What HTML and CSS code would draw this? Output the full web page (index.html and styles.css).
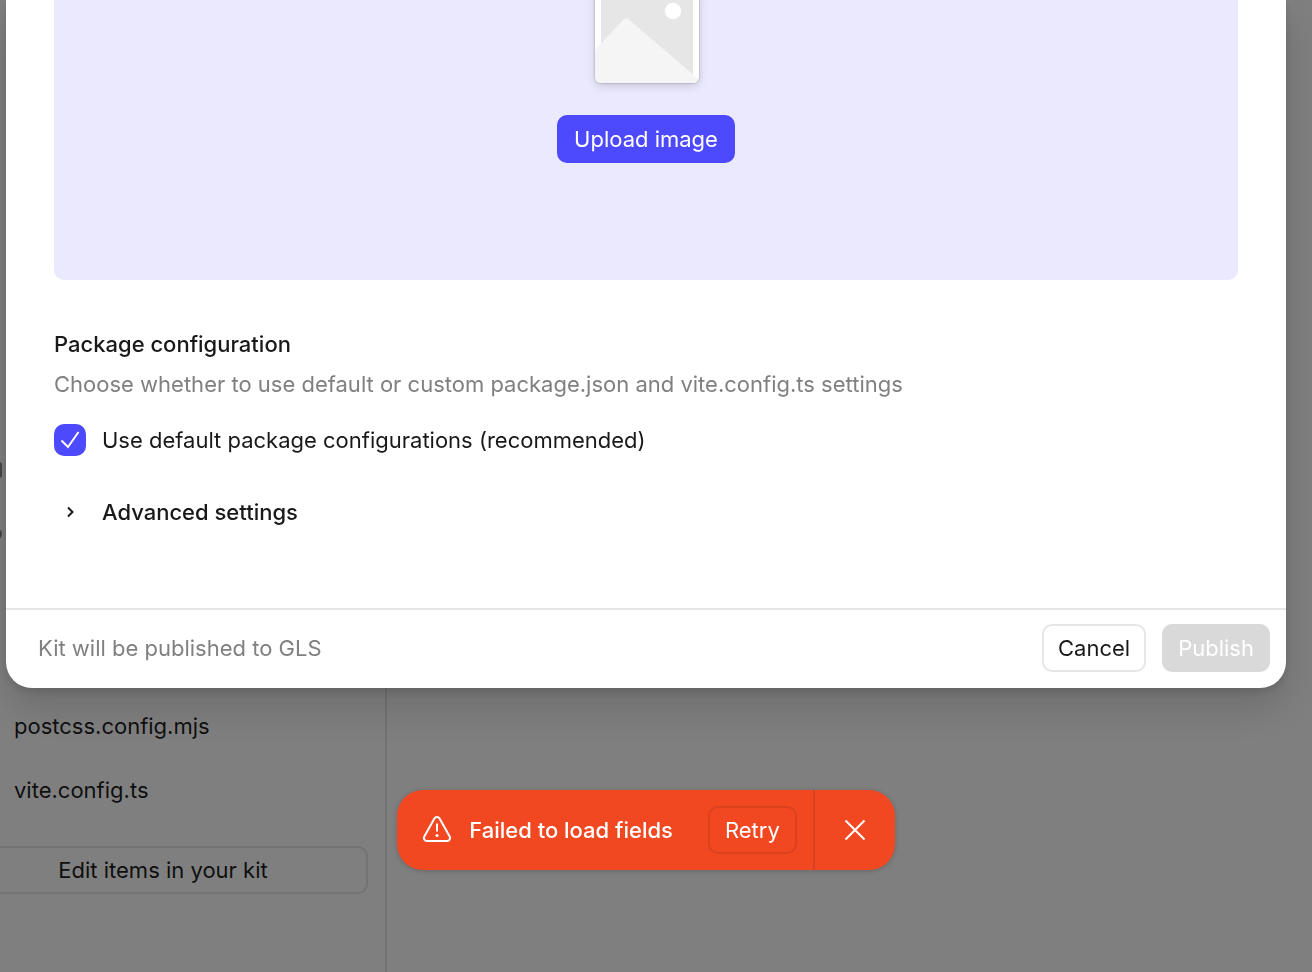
FILE: index.html
```html
<!DOCTYPE html>
<html lang="en">
<head>
<meta charset="utf-8">
<meta name="viewport" content="width=device-width, initial-scale=1">
<title>Publish kit</title>
<link rel="stylesheet" href="styles.css">
</head>
<body>
<div class="app">
  <aside class="sidebar">
    <ul class="files">
      <li class="file"><span class="file-mark"></span></li>
      <li class="file"><span class="file-mark file-mark-small"></span></li>
      <li class="file"></li>
      <li class="file"></li>
      <li class="file">postcss.config.mjs</li>
      <li class="file">vite.config.ts</li>
    </ul>
    <button class="btn edit-btn" type="button">Edit items in your kit</button>
  </aside>
  <main class="canvas"></main>
</div>

<div class="overlay">
  <div class="modal" role="dialog" aria-label="Publish kit">
    <div class="modal-body">
      <section class="dropzone">
        <svg class="thumb" width="124" height="100" viewBox="584 0 124 100" aria-hidden="true">
          <path class="thumb-card" d="M595-10H699V77a6 6 0 0 1-6 6H601a6 6 0 0 1-6-6Z"/>
          <path fill="#e6e6e6" d="M601-10H693V78H601Z"/>
          <path fill="#f5f5f5" d="M595 50 623.500 19.500Q626 17 629 19.500L693 74.500 698.500 79.500A6 6 0 0 1 693 83H601a6 6 0 0 1-6-6Z"/>
          <circle cx="673" cy="11" r="8.200" fill="#fff"/>
        </svg>
        <button class="btn btn-primary" type="button">Upload image</button>
      </section>
      <section class="config">
        <h2 class="title">Package configuration</h2>
        <p class="hint">Choose whether to use default or custom package.json and vite.config.ts settings</p>
        <label class="option">
          <span class="check">
            <input class="check-input" type="checkbox" checked>
            <svg class="check-icon" width="32" height="32" viewBox="0 0 32 32" aria-hidden="true"><path d="M7.500 16.500 14 23 24.500 8"/></svg>
          </span>
          <span>Use default package configurations (recommended)</span>
        </label>
        <button class="advanced" type="button" aria-expanded="false">
          <svg class="chevron" width="32" height="32" viewBox="0 0 32 32" aria-hidden="true"><path d="M14 11.500 18.500 16 14 20.500"/></svg>
          Advanced settings
        </button>
      </section>
    </div>
    <footer class="modal-footer">
      <p class="status">Kit will be published to GLS</p>
      <button class="btn btn-outline" type="button">Cancel</button>
      <button class="btn btn-disabled" type="button" disabled>Publish</button>
    </footer>
  </div>
</div>

<div class="toast-layer">
  <div class="toast" role="alert">
    <div class="toast-main">
      <svg class="warning" width="32" height="32" viewBox="0 0 32 32" aria-hidden="true">
        <path d="M13.400 4.600a3 3 0 0 1 5.200 0L28.700 22.400a3 3 0 0 1-2.600 4.500H5.900a3 3 0 0 1-2.600-4.500Z"/>
        <path d="M16 9.500V17.500"/>
        <circle cx="16" cy="21.500" r="1.500"/>
      </svg>
      <strong class="toast-text">Failed to load fields</strong>
      <button class="btn retry" type="button">Retry</button>
    </div>
    <button class="close" type="button" aria-label="Dismiss">
      <svg width="32" height="32" viewBox="0 0 32 32" aria-hidden="true"><path d="M6.500 6.500 25.500 25.500M25.500 6.500 6.500 25.500"/></svg>
    </button>
  </div>
</div>
</body>
</html>
```
FILE: styles.css
```css
* { box-sizing: border-box; }

body {
  margin: 0;
  overflow: hidden;
  background: #fff;
  color: rgba(0, 0, 0, 0.9);
  font-family: Inter, "Liberation Sans", sans-serif;
  font-size: 22px;
  line-height: 32px;
}

h2, p, ul { margin: 0; padding: 0; }
button { margin: 0; font: inherit; color: inherit; }
svg { display: block; flex: none; }

.app { display: flex; height: 100vh; }

.sidebar {
  display: flex;
  flex: none;
  flex-direction: column;
  justify-content: flex-end;
  gap: 24px;
  width: 445px;
  margin-left: -58px;
  padding: 0 17px 78px 16px;
  border-right: 2px solid #e6e6e6;
}

.files { list-style: none; }
.file { display: flex; align-items: center; height: 64px; padding-left: 30px; }
.file-mark { width: 14px; height: 16px; border-radius: 3px; background: #8c8c8c; }
.file-mark-small { height: 12px; border-radius: 6px; }
.file:nth-child(n+5) { padding-left: 56px; }
.canvas { flex: 1; }

.btn {
  height: 48px;
  padding: 0 14px;
  border: 2px solid transparent;
  border-radius: 10px;
  background: transparent;
  white-space: nowrap;
}
.edit-btn { flex: none; border-color: #e6e6e6; }
.btn-primary { padding: 0 15px; border-color: #4d49fc; background: #4d49fc; color: #fff; }
.btn-outline { border-color: #e6e6e6; background: #fff; }
.btn-disabled { border-color: #d9d9d9; background: #d9d9d9; color: #fff; }

.overlay {
  position: fixed;
  inset: 0;
  padding: 0 26px 0 6px;
  background: rgba(0, 0, 0, 0.5);
}

.modal {
  border-radius: 0 0 26px 26px;
  background: #fff;
  box-shadow: 0 4px 10px rgba(0, 0, 0, 0.12), 0 20px 40px rgba(0, 0, 0, 0.15);
}
.modal-body { padding: 0 48px 80px; }

.dropzone {
  display: flex;
  flex-direction: column;
  align-items: center;
  gap: 15px;
  padding-bottom: 117px;
  border-radius: 0 0 10px 10px;
  background: #ebe9fd;
}
.thumb-card {
  fill: #fff;
  filter: drop-shadow(0 0 1px rgba(0, 0, 0, 0.3)) drop-shadow(0 3px 4px rgba(0, 0, 0, 0.14));
}

.config { display: flex; flex-direction: column; align-items: flex-start; padding-top: 48px; }
.title { font-size: 22px; font-weight: 550; }
.hint { margin-top: 8px; color: #808080; }

.option { display: flex; gap: 16px; margin-top: 24px; }
.check { display: grid; flex: none; }
.check > * { grid-area: 1 / 1; }
.check-input {
  width: 32px;
  height: 32px;
  margin: 0;
  border-radius: 10px;
  background: #4d49fc;
  appearance: none;
}
.check-icon { fill: none; stroke: #fff; stroke-width: 2; pointer-events: none; }

.advanced {
  display: flex;
  gap: 16px;
  margin-top: 40px;
  padding: 0;
  border: 0;
  background: none;
  font-weight: 550;
}
.chevron { fill: none; stroke: #1a1a1a; stroke-width: 2; }

.modal-footer {
  display: flex;
  align-items: center;
  gap: 16px;
  padding: 14px 16px 16px 32px;
  border-top: 2px solid #e6e6e6;
}
.status { flex: 1; color: #808080; }

.toast-layer {
  position: fixed;
  inset: auto 0 102px;
  display: flex;
  justify-content: center;
  padding: 0 26px 0 6px;
}
.toast {
  display: flex;
  border-radius: 26px;
  background: #f24822;
  color: #fff;
  box-shadow: 0 1px 5px rgba(0, 0, 0, 0.2);
}
.toast-main { display: flex; align-items: center; padding: 16px 16px 16px 24px; }
.toast-text { margin: 0 35px 0 16px; font-weight: 550; }
.warning { fill: none; stroke: #fff; stroke-width: 2; }
.warning circle { fill: #fff; stroke: none; }
.retry { padding: 0 15px; border-color: #da411f; }
.close {
  display: grid;
  place-items: center;
  width: 82px;
  padding: 0;
  border: 0;
  border-left: 2px solid #da411f;
  background: none;
}
.close path { fill: none; stroke: #fff; stroke-width: 2; }
```
